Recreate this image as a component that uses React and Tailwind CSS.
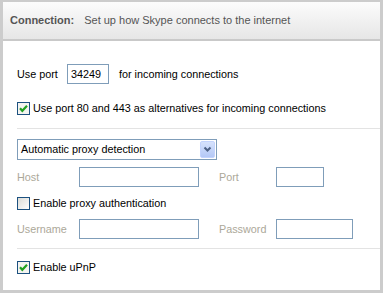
import React from 'react';

const Checkbox = ({ checked }) => (
  <span
    className={`flex items-center justify-center w-[13px] h-[13px] border border-[#1c5180] ${
      checked ? 'bg-[#f4f4f0]' : 'bg-gradient-to-br from-[#dcdcd7] to-[#ffffff]'
    }`}
  >
    {checked && (
      <svg width="9" height="9" viewBox="0 0 9 9">
        <path d="M1 4.3 L3.3 6.8 L8 1.8" fill="none" stroke="#21a121" strokeWidth="2.2" />
      </svg>
    )}
  </span>
);

const Field = ({ w }) => <div className={`h-5 border border-[#7f9db9] bg-white ${w}`} />;

export default function App() {
  return (
    <div className="bg-white w-[386px] h-[296px] font-['Liberation_Sans',Arial,sans-serif] text-[10.8px] text-black">
      <div className="w-[383px] h-[293px] border-x-[3px] border-b-[3px] border-t-2 border-[#cccccc] flex flex-col">
        <div className="h-[39px] border-b-2 border-[#c9c9c9] bg-gradient-to-b from-[#fcfcfc] to-[#e6e6e6] flex items-center pl-[7px] text-[#555555] text-[11px]">
          <span className="font-bold">Connection:</span>
          <span className="ml-[10px]">Set up how Skype connects to the internet</span>
        </div>

        <div className="flex flex-col pl-[14px]">
          <div className="mt-[23px] h-5 flex items-center">
            <span className="w-[50px]">Use port</span>
            <div className="w-[42px] h-5 border border-[#7f9db9] flex items-center pl-[3px]">34249</div>
            <span className="ml-[10px]">for incoming connections</span>
          </div>

          <div className="mt-[18px] h-[13px] flex items-center gap-[3px]">
            <Checkbox checked />
            <span>Use port 80 and 443 as alternatives for incoming connections</span>
          </div>

          <div className="mt-[13px] h-px bg-[#e3e3e3]" />

          <div className="mt-[10px] w-[200px] h-[21px] border border-[#7f9db9] flex items-center justify-between pl-[3px] pr-px">
            <span>Automatic proxy detection</span>
            <span className="w-[15px] h-[17px] rounded-[2px] bg-gradient-to-b from-[#d6e2fc] to-[#b4c8f6] border border-[#c3d3fd] flex items-center justify-center">
              <svg width="9" height="7" viewBox="0 0 9 7">
                <path d="M1.5 1.5 L4.5 4.5 L7.5 1.5" fill="none" stroke="#4d6185" strokeWidth="2" />
              </svg>
            </span>
          </div>

          <div className="mt-[7px] h-5 flex items-center text-[#aca899]">
            <span className="w-[62px]">Host</span>
            <Field w="w-[120px]" />
            <span className="ml-[20px] w-[57px]">Port</span>
            <Field w="w-[48px]" />
          </div>

          <div className="mt-[10px] h-[13px] flex items-center gap-[3px]">
            <Checkbox />
            <span>Enable proxy authentication</span>
          </div>

          <div className="mt-[9px] h-5 flex items-center text-[#aca899]">
            <span className="w-[62px]">Username</span>
            <Field w="w-[120px]" />
            <span className="ml-[20px] w-[57px]">Password</span>
            <Field w="w-[77px]" />
          </div>

          <div className="mt-[9px] h-px bg-[#e3e3e3]" />

          <div className="mt-[12px] h-[13px] flex items-center gap-[3px]">
            <Checkbox checked />
            <span>Enable uPnP</span>
          </div>
        </div>
      </div>
    </div>
  );
}
